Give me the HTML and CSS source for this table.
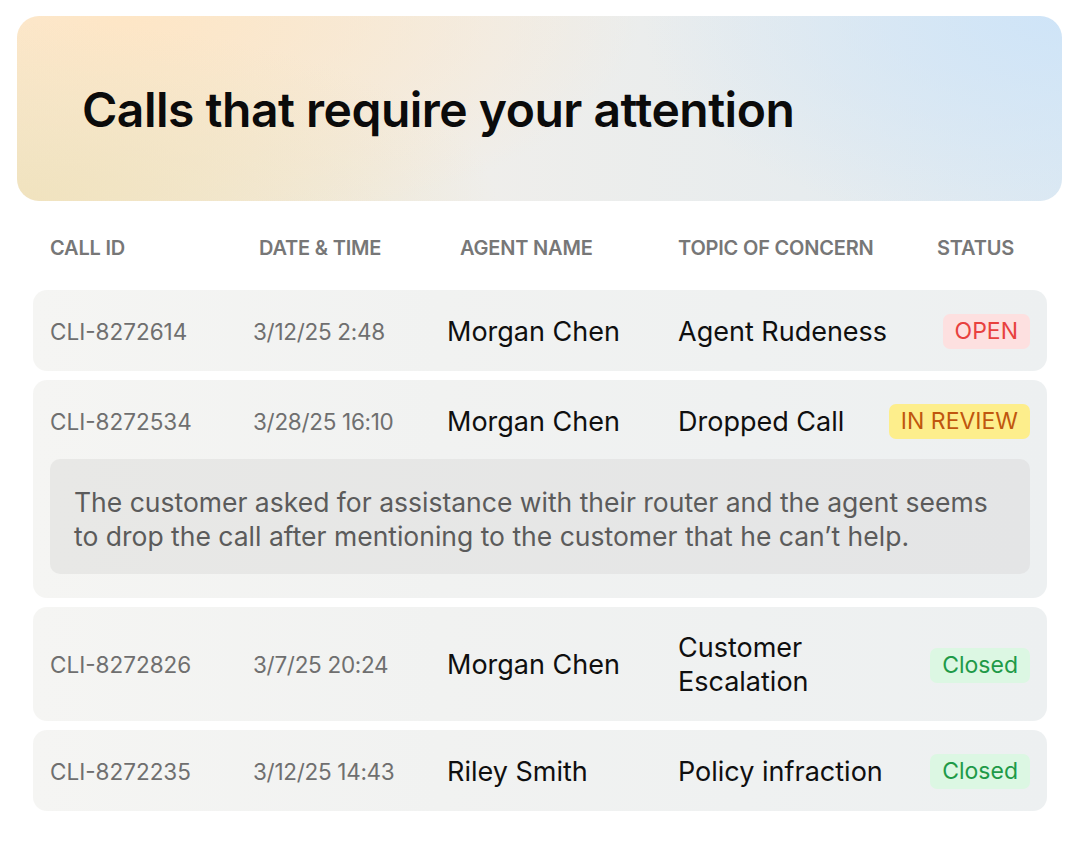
FILE: index.html
```html
<!DOCTYPE html>
<html lang="en">

<head>
    <meta charset="UTF-8">
    <meta name="viewport" content="width=device-width, initial-scale=1.0">
    <title>Calls that require your attention</title>
    <link rel="stylesheet" href="styles.css">
</head>

<body>
    <div class="page">
        <div class="hero">
            <h1>Calls that require your attention</h1>
        </div>

        <div class="calls">
            <div class="calls-head">
                <span>CALL ID</span>
                <span>DATE &amp; TIME</span>
                <span>AGENT NAME</span>
                <span>TOPIC OF CONCERN</span>
                <span class="head-status">STATUS</span>
            </div>

            <div class="call">
                <span class="call-id">CLI-8272614</span>
                <span class="call-date">3/12/25 2:48</span>
                <span class="call-agent">Morgan Chen</span>
                <span class="call-topic">Agent Rudeness</span>
                <span class="badge open">OPEN</span>
            </div>

            <div class="call">
                <span class="call-id">CLI-8272534</span>
                <span class="call-date">3/28/25 16:10</span>
                <span class="call-agent">Morgan Chen</span>
                <span class="call-topic">Dropped Call</span>
                <span class="badge review">IN REVIEW</span>
                <p class="call-note">The customer asked for assistance with their router and the agent seems to drop the call after mentioning to the customer that he can’t help.</p>
            </div>

            <div class="call">
                <span class="call-id">CLI-8272826</span>
                <span class="call-date">3/7/25 20:24</span>
                <span class="call-agent">Morgan Chen</span>
                <span class="call-topic">Customer Escalation</span>
                <span class="badge closed">Closed</span>
            </div>

            <div class="call">
                <span class="call-id">CLI-8272235</span>
                <span class="call-date">3/12/25 14:43</span>
                <span class="call-agent">Riley Smith</span>
                <span class="call-topic">Policy infraction</span>
                <span class="badge closed">Closed</span>
            </div>
        </div>
    </div>
</body>

</html>
```

FILE: styles.css
```css
body {
    margin: 0;
    background-color: #ffffff;
    font-family: Inter, "Noto Sans", Arial, sans-serif;
    color: #111111;
}

.page {
    width: 1045px;
    padding: 16px 0 0 17px;
}

.hero {
    height: 185px;
    border-radius: 22px;
    padding-left: 65px;
    display: flex;
    align-items: center;
    background:
        radial-gradient(ellipse 420px 220px at 100% 0%, rgba(206, 228, 248, 0.95), rgba(206, 228, 248, 0) 100%),
        radial-gradient(ellipse 480px 180px at 0% 100%, rgba(240, 226, 188, 0.9), rgba(240, 226, 188, 0) 100%),
        radial-gradient(ellipse 520px 220px at 10% 0%, rgba(254, 230, 198, 1), rgba(254, 230, 198, 0) 100%),
        linear-gradient(90deg, #f3e9d6 0%, #efeeeb 45%, #e7ecee 75%, #dde9f2 100%);
}

.hero h1 {
    margin: 0;
    padding-top: 2px;
    font-size: 48px;
    font-weight: 600;
    letter-spacing: -0.5px;
    color: #0b0b0b;
}

.calls {
    margin: 0 15px 0 16px;
}

.calls-head,
.call {
    display: grid;
    grid-template-columns: 203px 194px 231px minmax(0, 1fr) auto;
    align-items: center;
}

.calls-head {
    padding: 4px 17px 0 17px;
    height: 85px;
    font-size: 20px;
    font-weight: 600;
    color: #777777;
    letter-spacing: -0.2px;
}

.calls-head span:nth-child(2) {
    padding-left: 6px;
}

.calls-head span:nth-child(3) {
    padding-left: 13px;
}

.head-status {
    justify-self: end;
    margin-right: 16px;
}

.call {
    padding: 24px 17px 22px 17px;
    margin-bottom: 9px;
    border-radius: 14px;
    background: linear-gradient(90deg, #f5f5f3 0%, #f1f2f1 40%, #edf0f1 100%);
    line-height: 34px;
}

.call-id {
    font-size: 22.5px;
    color: #6f6f6f;
}

.call-date {
    font-size: 22.5px;
    color: #6f6f6f;
    letter-spacing: -0.3px;
}

.call-agent,
.call-topic {
    font-size: 27px;
    color: #0f0f0f;
}

.call-topic {
    max-width: 215px;
}

.badge {
    justify-self: end;
    white-space: nowrap;
    padding: 0 12px;
    height: 35px;
    line-height: 35px;
    border-radius: 7px;
    font-size: 23px;
}

.open {
    background-color: #fde0e0;
    color: #e8413e;
}

.review {
    background-color: #fdee8c;
    color: #c0560e;
}

.closed {
    background-color: #dcf7e3;
    color: #1f9a48;
}

.call-note {
    grid-column: 1 / -1;
    margin: 20px 0 2px 0;
    padding: 26px 24px 21px 24px;
    border-radius: 10px;
    background: linear-gradient(90deg, #e8e8e6 0%, #e4e5e6 100%);
    font-size: 26.5px;
    line-height: 34px;
    color: #5b5b5b;
}
```
